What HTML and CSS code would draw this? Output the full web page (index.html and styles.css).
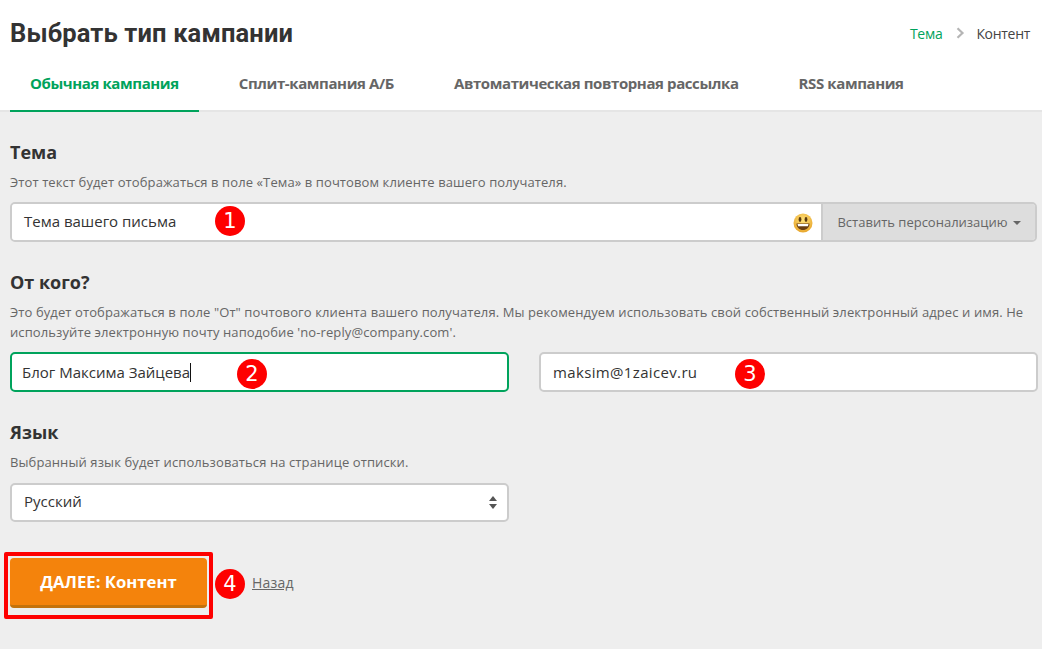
FILE: index.html
```html
<!DOCTYPE html>
<html lang="ru">
<head>
<meta charset="utf-8">
<title>Выбрать тип кампании</title>
<link rel="stylesheet" href="styles.css">
</head>
<body>
<header class="top">
  <div class="title-row">
    <h1 class="title">Выбрать тип кампании</h1>
    <nav class="crumbs">
      <span class="crumb-active">Тема</span>
      <svg class="crumb-arrow" width="9" height="12" viewBox="0 0 9 12"><path d="M1.5 1.2 6.500 6 1.500 10.800" fill="none" stroke="#b5b5b5" stroke-width="2.2"/></svg>
      <span>Контент</span>
    </nav>
  </div>
  <nav class="tabs">
    <a class="tab tab-active">Обычная кампания</a>
    <a class="tab">Сплит-кампания А/Б</a>
    <a class="tab">Автоматическая повторная рассылка</a>
    <a class="tab">RSS кампания</a>
  </nav>
</header>
<main class="content">
  <section class="section section-first">
    <h2 class="label">Тема</h2>
    <p class="hint">Этот текст будет отображаться в поле «Тема» в почтовом клиенте вашего получателя.</p>
    <div class="group">
      <div class="group-field">
        <span class="value">Тема вашего письма</span>
        <span class="badge badge-1">1</span>
        <svg class="emoji" width="20" height="20" viewBox="0 0 20 20">
          <defs><radialGradient id="face" cx="50%" cy="35%" r="65%"><stop offset="0" stop-color="#ffe27a"/><stop offset="1" stop-color="#e8a62c"/></radialGradient></defs>
          <circle cx="10" cy="10" r="9.5" fill="url(#face)"/>
          <ellipse cx="7" cy="6.500" rx="1.400" ry="2.400" fill="#5a3a10"/>
          <ellipse cx="13" cy="6.500" rx="1.400" ry="2.400" fill="#5a3a10"/>
          <path d="M3.500 10.500h13c0 4-3 6.500-6.500 6.500s-6.500-2.500-6.500-6.500z" fill="#6b3f12"/>
          <path d="M4.500 11h11l-.6 2.200H5.100z" fill="#fff"/>
        </svg>
      </div>
      <div class="group-btn">Вставить персонализацию<span class="caret"></span></div>
    </div>
  </section>
  <section class="section">
    <h2 class="label">От кого?</h2>
    <p class="hint hint-wide">Это будет отображаться в поле "От" почтового клиента вашего получателя. Мы рекомендуем использовать свой собственный электронный адрес и имя. Не используйте электронную почту наподобие 'no-reply@company.com'.</p>
    <div class="pair">
      <div class="field field-focus"><span class="value">Блог Максима Зайцева</span><span class="cursor"></span><span class="badge badge-2">2</span></div>
      <div class="field"><span class="value value-email">maksim@1zaicev.ru</span><span class="badge badge-3">3</span></div>
    </div>
  </section>
  <section class="section">
    <h2 class="label">Язык</h2>
    <p class="hint">Выбранный язык будет использоваться на странице отписки.</p>
    <div class="field field-select">
      <span class="value">Русский</span>
      <span class="spinner"><i class="up"></i><i class="down"></i></span>
    </div>
  </section>
  <div class="actions">
    <div class="frame"><button class="next">ДАЛЕЕ: Контент</button></div>
    <span class="badge badge-4">4</span>
    <a class="back">Назад</a>
  </div>
</main>
</body>
</html>
```
FILE: styles.css
```css
* { box-sizing: border-box; }
html, body { margin: 0; padding: 0; }
body {
  width: 1042px;
  height: 649px;
  overflow: hidden;
  background: #eeeeee;
  font-family: "Open Sans", "Noto Sans", sans-serif;
  color: #333;
}
.top {
  background: #fff;
  height: 112px;
  padding: 0 12px 0 10px;
  border-bottom: 2px solid #e5e5e5;
}
.title-row {
  display: flex;
  justify-content: space-between;
  align-items: center;
  height: 66px;
}
.title { margin: 0; font-family: Roboto, sans-serif; font-size: 25.500px; line-height: 32px; font-weight: 700; letter-spacing: .15px; color: #333; }
.crumbs { display: flex; align-items: center; font-size: 14px; color: #444; letter-spacing: -.3px; }
.crumb-active { color: #00a35c; }
.crumb-arrow { margin: 0 11px 0 14px; }
.tabs { display: flex; gap: 20px; height: 46px; }
.tab {
  display: flex;
  align-items: center;
  height: 46px;
  padding: 0 20px 10px;
  border-bottom: 2px solid transparent;
  font-size: 15px;
  font-weight: 700;
  color: #666;
  letter-spacing: -.4px;
}
.tab-active { color: #00a35c; border-bottom-color: #00a35c; }
.content { padding: 0 4px 0 10px; }
.section { padding-top: 28px; }
.label { margin: 0; font-size: 18px; line-height: 24px; font-weight: 700; color: #333; }
.hint { margin: 8px 0 0; font-size: 13px; line-height: 20px; color: #666; letter-spacing: .1px; }
.hint-wide { width: 1028px; }
.group {
  display: flex;
  height: 40px;
  margin-top: 10px;
  width: 1027px;
  border: 2px solid #ccc;
  border-radius: 5px;
  overflow: hidden;
}
.group-field {
  flex: 1;
  position: relative;
  display: flex;
  align-items: center;
  padding: 0 0 2px 12px;
  background: #fff;
}
.value { font-size: 15px; color: #333; }
.value-email { letter-spacing: .35px; }
.emoji { position: absolute; right: 8px; top: 9px; }
.group-btn {
  width: 214px;
  display: flex;
  align-items: center;
  justify-content: center;
  padding-bottom: 1px;
  background: #dddddd;
  border-left: 2px solid #ccc;
  font-size: 13px;
  color: #666;
}
.caret {
  margin-left: 5px;
  margin-top: 2px;
  border-left: 4px solid transparent;
  border-right: 4px solid transparent;
  border-top: 4px solid #666;
}
.pair { display: flex; gap: 30px; margin-top: 10px; width: 1028px; }
.field {
  position: relative;
  display: flex;
  align-items: center;
  flex: none;
  width: 499px;
  height: 40px;
  padding-left: 12px;
  background: #fff;
  border: 2px solid #ccc;
  border-radius: 5px;
}
.field-focus { border-color: #00a35c; padding-left: 10px; }
.cursor { width: 1px; height: 19px; background: #111; }
.field-select { height: 39px; margin-top: 11px; padding-bottom: 3px; }
.spinner { position: absolute; right: 10px; top: 11px; display: flex; flex-direction: column; gap: 3px; }
.up, .down { display: block; border-left: 4px solid transparent; border-right: 4px solid transparent; }
.up { border-bottom: 5px solid #555; }
.down { border-top: 5px solid #555; }
.badge {
  position: absolute;
  width: 30px;
  height: 30px;
  border-radius: 50%;
  background: #fe0000;
  color: #fff;
  font-size: 21px;
  line-height: 30px;
  text-align: center;
  font-family: "DejaVu Sans", sans-serif;
}
.badge-1 { left: 203px; top: 2px; }
.badge-2 { left: 225px; top: 5px; }
.badge-3 { left: 194px; top: 5px; }
.badge-4 { left: 211px; top: 17px; }
.actions { position: relative; display: flex; align-items: center; margin-top: 30px; margin-left: -6px; }
.frame {
  padding: 2px;
  border: 4px solid #fe0000;
  border-radius: 2px;
  height: 67px;
  width: 209px;
}
.next {
  display: block;
  width: 197px;
  height: 50px;
  padding: 0;
  border: 0;
  border-bottom: 3px solid #c4720c;
  border-radius: 4px;
  background: #f4830c;
  color: #fff;
  font-family: inherit;
  font-size: 16.700px;
  font-weight: 700;
}
.back { margin: 0 0 7px 39px; font-size: 14px; letter-spacing: .2px; color: #666; text-decoration: underline; }
```
